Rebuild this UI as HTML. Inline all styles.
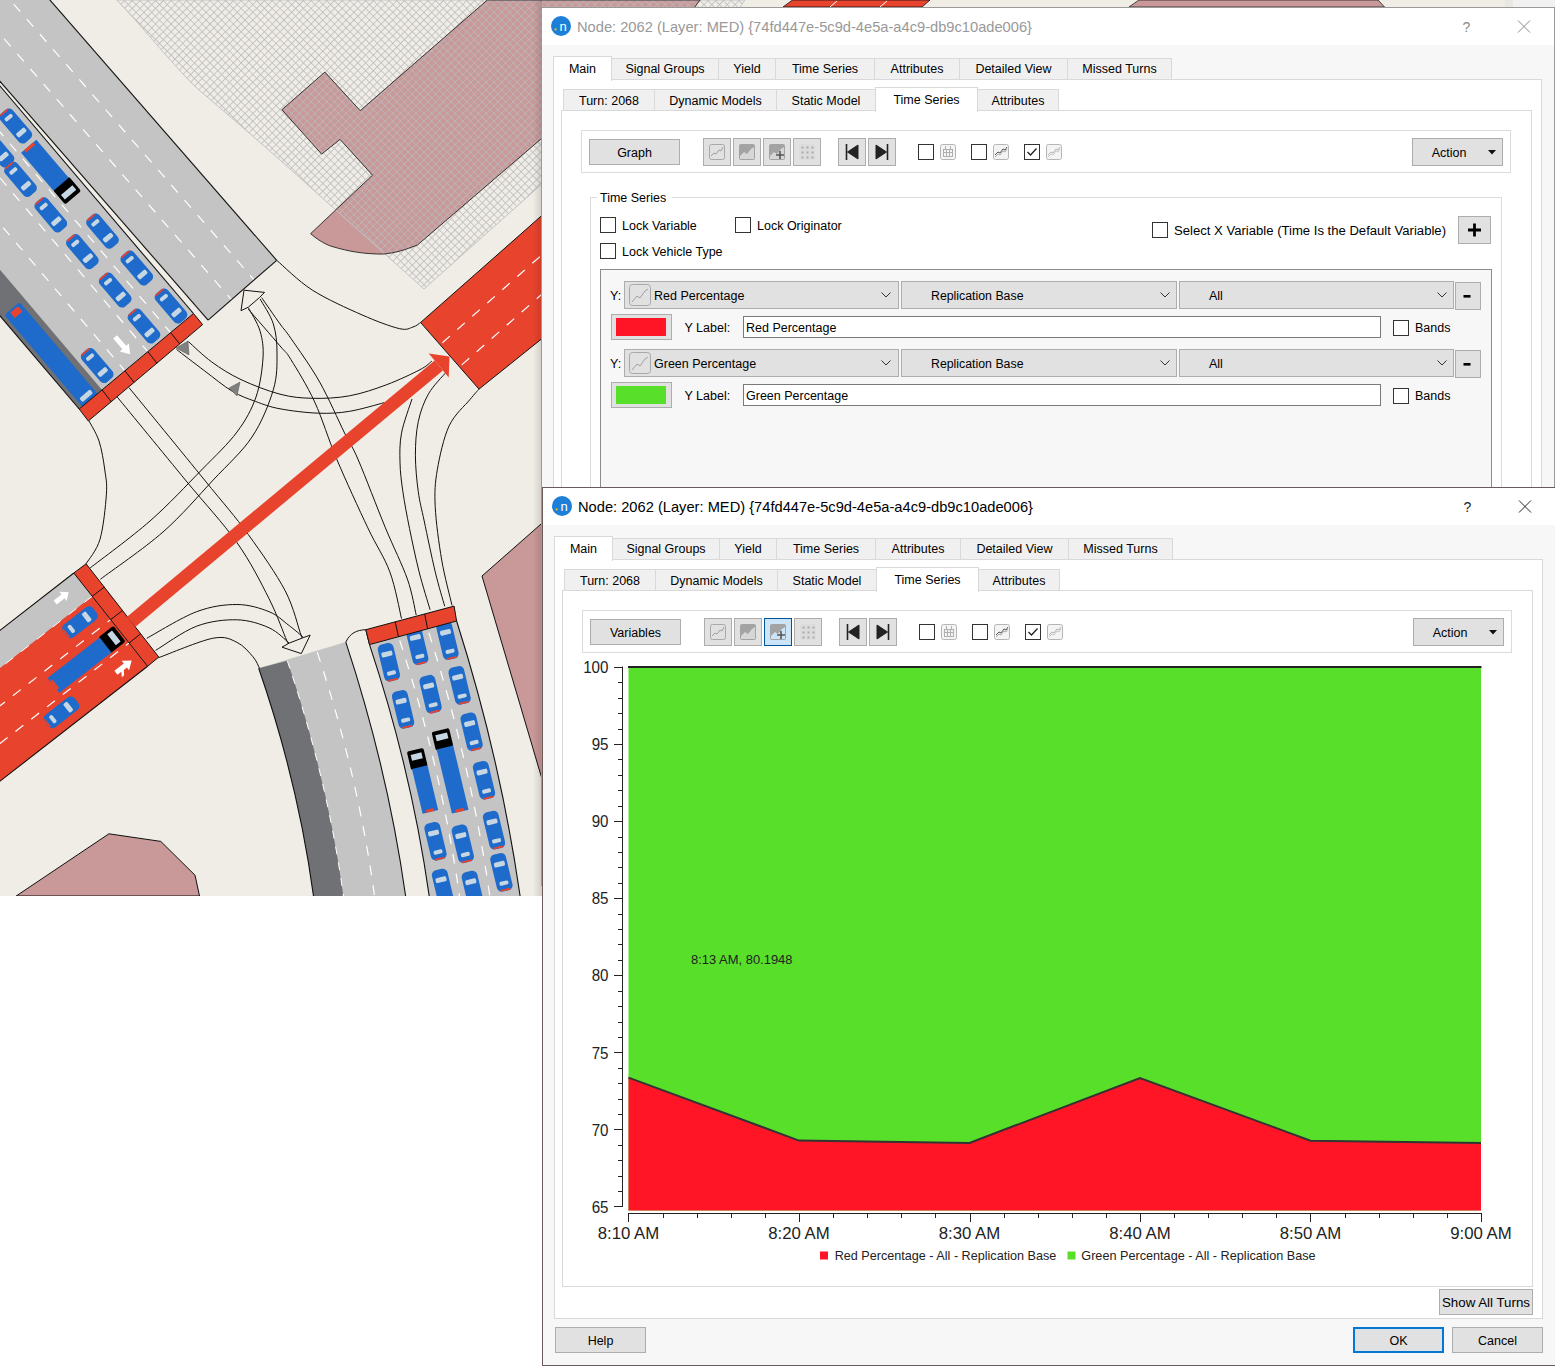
<!DOCTYPE html>
<html><head><meta charset="utf-8"><style>
html,body{margin:0;padding:0;background:#fff;width:1555px;height:1366px;overflow:hidden}
svg{display:block;font-family:"Liberation Sans", sans-serif}
</style></head><body>
<svg width="1555" height="1366" viewBox="0 0 1555 1366">

<defs><pattern id="hatch" width="5.5" height="5.5" patternUnits="userSpaceOnUse" patternTransform="rotate(45)"><path d="M0 0.4 H5.5 M0.4 0 V5.5" stroke="#b9b9bb" stroke-width="0.8" fill="none"/></pattern><linearGradient id="shad" x1="0" x2="1" y1="0" y2="0"><stop offset="0" stop-color="#000" stop-opacity="0"/><stop offset="1" stop-color="#000" stop-opacity="0.13"/></linearGradient><clipPath id="mapclip"><rect x="0" y="0" width="542" height="896"/><rect x="541" y="0" width="1014" height="7"/></clipPath></defs><g clip-path="url(#mapclip)"><rect x="0" y="0" width="1555" height="896" fill="#f0ede6"/><path d="M487.3,0 L360.2,110.7 L324.9,72.1 L281.9,109.7 L321.6,154.1 L340.1,139.4 L372.5,175.2 L310.6,233.7 C318,240 325,244 330.5,246 C350,252 365,254 382.7,254.1 C395,253 405,250 417.6,244.9 L540.5,139.4 L694.8,7 L700,0 Z" fill="#c99898"/><path d="M116.8,0 C150,35 170,62 196.8,88.1 C225,112 255,138 280,160 L424,289 L542.6,183.4 L740,7 L745,0 Z" fill="url(#hatch)" stroke="#c4c4c4" stroke-width="1"/><path d="M487.3,0 L360.2,110.7 L324.9,72.1 L281.9,109.7 L321.6,154.1 L340.1,139.4 L372.5,175.2 L310.6,233.7 C318,240 325,244 330.5,246 C350,252 365,254 382.7,254.1 C395,253 405,250 417.6,244.9 L540.5,139.4 L694.8,7 L700,0 Z" fill="none" stroke="#222" stroke-width="0.9"/><rect x="1505" y="0" width="8" height="7" fill="#e9e7e2"/><rect x="1513" y="0" width="42" height="7" fill="#f1f1f1"/><polygon points="1129,7 1139,0 1378,0 1384.5,7" fill="#c99898" stroke="#222" stroke-width="0.8"/><polygon points="276.7,260.3 208.1,320.1 -67.9,3.4 0.8,-56.4" fill="#c4c4c4"/><line x1="254.1" y1="280.0" x2="-21.9" y2="-36.7" stroke="#fff" stroke-width="1.2" stroke-dasharray="10 10" stroke-dashoffset="4"/><line x1="231.5" y1="299.7" x2="-44.5" y2="-17.0" stroke="#fff" stroke-width="1.2" stroke-dasharray="10 10" stroke-dashoffset="4"/><line x1="276.7" y1="260.3" x2="0.8" y2="-56.4" stroke="#111" stroke-width="1.1"/><line x1="208.1" y1="320.1" x2="-67.9" y2="3.4" stroke="#111" stroke-width="1.1"/><line x1="276.7" y1="260.3" x2="208.1" y2="320.1" stroke="#111" stroke-width="1.1"/><polygon points="193.5,313.5 79.2,409.0 -193.0,89.0 -78.7,-6.5" fill="#c4c4c4"/><polygon points="102.1,389.9 79.2,409.0 -193.0,89.0 -170.1,69.9" fill="#707174"/><line x1="124.9" y1="370.8" x2="-147.2" y2="50.8" stroke="#fff" stroke-width="1.2" stroke-dasharray="10 10" stroke-dashoffset="2"/><line x1="147.8" y1="351.7" x2="-124.4" y2="31.7" stroke="#fff" stroke-width="1.2" stroke-dasharray="10 10" stroke-dashoffset="2"/><line x1="170.6" y1="332.6" x2="-101.5" y2="12.6" stroke="#fff" stroke-width="1.2" stroke-dasharray="10 10" stroke-dashoffset="2"/><line x1="79.2" y1="409.0" x2="-193.0" y2="89.0" stroke="#111" stroke-width="1.1"/><line x1="193.5" y1="313.5" x2="-78.7" y2="-6.5" stroke="#111" stroke-width="1.1"/><g transform="translate(15.8,126.0) rotate(139.6)"><rect x="-8.0" y="-19.0" width="16" height="38" rx="5" fill="#1e6bcb"/><rect x="-5.5" y="-11.0" width="11" height="5" rx="1.5" fill="#c6d6e2"/><rect x="-4.5" y="9.0" width="9" height="4" rx="1.5" fill="#c6d6e2"/><rect x="-5.0" y="17.0" width="10" height="1.8" fill="#e8432d"/></g><g transform="translate(-2.0,150.0) rotate(139.6)"><rect x="-8.0" y="-19.0" width="16" height="38" rx="5" fill="#1e6bcb"/><rect x="-5.5" y="-11.0" width="11" height="5" rx="1.5" fill="#c6d6e2"/><rect x="-4.5" y="9.0" width="9" height="4" rx="1.5" fill="#c6d6e2"/><rect x="-5.0" y="17.0" width="10" height="1.8" fill="#e8432d"/></g><g transform="translate(20.5,179.3) rotate(139.6)"><rect x="-8.0" y="-19.0" width="16" height="38" rx="5" fill="#1e6bcb"/><rect x="-5.5" y="-11.0" width="11" height="5" rx="1.5" fill="#c6d6e2"/><rect x="-4.5" y="9.0" width="9" height="4" rx="1.5" fill="#c6d6e2"/><rect x="-5.0" y="17.0" width="10" height="1.8" fill="#e8432d"/></g><g transform="translate(50.8,214.8) rotate(139.6)"><rect x="-8.0" y="-19.0" width="16" height="38" rx="5" fill="#1e6bcb"/><rect x="-5.5" y="-11.0" width="11" height="5" rx="1.5" fill="#c6d6e2"/><rect x="-4.5" y="9.0" width="9" height="4" rx="1.5" fill="#c6d6e2"/><rect x="-5.0" y="17.0" width="10" height="1.8" fill="#e8432d"/></g><g transform="translate(102.5,231.2) rotate(139.6)"><rect x="-8.0" y="-19.0" width="16" height="38" rx="5" fill="#1e6bcb"/><rect x="-5.5" y="-11.0" width="11" height="5" rx="1.5" fill="#c6d6e2"/><rect x="-4.5" y="9.0" width="9" height="4" rx="1.5" fill="#c6d6e2"/><rect x="-5.0" y="17.0" width="10" height="1.8" fill="#e8432d"/></g><g transform="translate(82.4,251.7) rotate(139.6)"><rect x="-8.0" y="-19.0" width="16" height="38" rx="5" fill="#1e6bcb"/><rect x="-5.5" y="-11.0" width="11" height="5" rx="1.5" fill="#c6d6e2"/><rect x="-4.5" y="9.0" width="9" height="4" rx="1.5" fill="#c6d6e2"/><rect x="-5.0" y="17.0" width="10" height="1.8" fill="#e8432d"/></g><g transform="translate(136.8,268.0) rotate(139.6)"><rect x="-8.0" y="-19.0" width="16" height="38" rx="5" fill="#1e6bcb"/><rect x="-5.5" y="-11.0" width="11" height="5" rx="1.5" fill="#c6d6e2"/><rect x="-4.5" y="9.0" width="9" height="4" rx="1.5" fill="#c6d6e2"/><rect x="-5.0" y="17.0" width="10" height="1.8" fill="#e8432d"/></g><g transform="translate(115.2,290.0) rotate(139.6)"><rect x="-8.0" y="-19.0" width="16" height="38" rx="5" fill="#1e6bcb"/><rect x="-5.5" y="-11.0" width="11" height="5" rx="1.5" fill="#c6d6e2"/><rect x="-4.5" y="9.0" width="9" height="4" rx="1.5" fill="#c6d6e2"/><rect x="-5.0" y="17.0" width="10" height="1.8" fill="#e8432d"/></g><g transform="translate(171.0,306.0) rotate(139.6)"><rect x="-8.0" y="-19.0" width="16" height="38" rx="5" fill="#1e6bcb"/><rect x="-5.5" y="-11.0" width="11" height="5" rx="1.5" fill="#c6d6e2"/><rect x="-4.5" y="9.0" width="9" height="4" rx="1.5" fill="#c6d6e2"/><rect x="-5.0" y="17.0" width="10" height="1.8" fill="#e8432d"/></g><g transform="translate(144.0,326.0) rotate(139.6)"><rect x="-8.0" y="-19.0" width="16" height="38" rx="5" fill="#1e6bcb"/><rect x="-5.5" y="-11.0" width="11" height="5" rx="1.5" fill="#c6d6e2"/><rect x="-4.5" y="9.0" width="9" height="4" rx="1.5" fill="#c6d6e2"/><rect x="-5.0" y="17.0" width="10" height="1.8" fill="#e8432d"/></g><g transform="translate(97.2,365.5) rotate(139.6)"><rect x="-8.0" y="-19.0" width="16" height="38" rx="5" fill="#1e6bcb"/><rect x="-5.5" y="-11.0" width="11" height="5" rx="1.5" fill="#c6d6e2"/><rect x="-4.5" y="9.0" width="9" height="4" rx="1.5" fill="#c6d6e2"/><rect x="-5.0" y="17.0" width="10" height="1.8" fill="#e8432d"/></g><g transform="translate(51.5,171.5) rotate(139.6)"><rect x="-10.0" y="-34.0" width="21" height="19" rx="2" fill="#000"/><rect x="-7.0" y="-30.0" width="15" height="6" fill="#c6d6e2"/><rect x="-9.0" y="-16.0" width="20" height="50" fill="#1e6bcb"/><rect x="-5.0" y="31.0" width="12" height="3" fill="#e8432d"/></g><g transform="translate(51.5,355.0) rotate(139.6)"><rect x="-10.0" y="-61.0" width="20" height="122" rx="3" fill="#1e6bcb"/><rect x="-7.0" y="-56.0" width="14" height="5" rx="1.5" fill="#c6d6e2"/><rect x="-6.0" y="52.0" width="10" height="7" fill="#e8432d"/></g><g transform="translate(123,346) rotate(-41)"><path d="M-2.5,-12 H2.5 V2 H6 L0,11 L-6,2 H-2.5 Z" fill="#fff"/></g><polygon points="79.2,409.0 193.5,313.5 202.6,324.6 88.3,421.0" fill="#e8432d" stroke="#111" stroke-width="1"/><line x1="102.1" y1="389.9" x2="111.2" y2="401.7" stroke="#111" stroke-width="1"/><line x1="124.9" y1="370.8" x2="134.0" y2="382.4" stroke="#111" stroke-width="1"/><line x1="147.8" y1="351.7" x2="156.9" y2="363.2" stroke="#111" stroke-width="1"/><line x1="170.6" y1="332.6" x2="179.7" y2="343.9" stroke="#111" stroke-width="1"/><polygon points="420.6,322.5 479.0,389.1 541.6,338.9 560.0,322.0 560.0,200.0 541.6,215.7" fill="#e8432d"/><path d="M541.6,215.7 L420.6,322.5 L479,389.1 L541.6,338.9" fill="none" stroke="#111" stroke-width="1"/><line x1="440.1" y1="344.7" x2="560.1" y2="238.8" stroke="#fff" stroke-width="1.2" stroke-dasharray="10 10" stroke-dashoffset="-3"/><line x1="459.5" y1="366.9" x2="579.5" y2="261.0" stroke="#fff" stroke-width="1.2" stroke-dasharray="10 10" stroke-dashoffset="-3"/><polygon points="783,7 792.5,0 930,0 922,7" fill="#e8432d" stroke="#111" stroke-width="0.8"/><path d="M830,7 L837,1 M880,7 L887,1" stroke="#fff" stroke-width="1"/><polygon points="73.8,573.0 147.6,666.3 -57.5,825.9 -131.3,732.6" fill="#e8432d"/><polygon points="73.8,573.0 92.2,596.3 -112.9,756.0 -131.3,732.6" fill="#c4c4c4"/><line x1="110.7" y1="619.6" x2="-94.4" y2="779.3" stroke="#fff" stroke-width="1.2" stroke-dasharray="10 10" stroke-dashoffset="6"/><line x1="129.1" y1="643.0" x2="-76.0" y2="802.6" stroke="#fff" stroke-width="1.2" stroke-dasharray="10 10" stroke-dashoffset="6"/><line x1="92.2" y1="596.3" x2="-112.9" y2="756.0" stroke="#fff" stroke-width="1" stroke-dasharray="10 10" stroke-dashoffset="0"/><line x1="73.8" y1="573.0" x2="-131.3" y2="732.6" stroke="#111" stroke-width="1.1"/><line x1="147.6" y1="666.3" x2="-57.5" y2="825.9" stroke="#111" stroke-width="1.1"/><g transform="translate(80.0,622.2) rotate(52.1)"><rect x="-8.0" y="-19.0" width="16" height="38" rx="5" fill="#1e6bcb"/><rect x="-5.5" y="-11.0" width="11" height="5" rx="1.5" fill="#c6d6e2"/><rect x="-4.5" y="9.0" width="9" height="4" rx="1.5" fill="#c6d6e2"/><rect x="-5.0" y="17.0" width="10" height="1.8" fill="#e8432d"/></g><g transform="translate(61.5,712.4) rotate(52.1)"><rect x="-8.0" y="-19.0" width="16" height="38" rx="5" fill="#1e6bcb"/><rect x="-5.5" y="-11.0" width="11" height="5" rx="1.5" fill="#c6d6e2"/><rect x="-4.5" y="9.0" width="9" height="4" rx="1.5" fill="#c6d6e2"/><rect x="-5.0" y="17.0" width="10" height="1.8" fill="#e8432d"/></g><g transform="translate(86.0,659.0) rotate(52.1)"><rect x="-9.5" y="-42.0" width="20" height="19" rx="2" fill="#000"/><rect x="-6.5" y="-38.0" width="14" height="6" fill="#c6d6e2"/><rect x="-8.5" y="-24.0" width="19" height="66" fill="#1e6bcb"/><rect x="-4.5" y="39.0" width="11" height="3" fill="#e8432d"/></g><g transform="translate(61.5,597.6) rotate(52)"><path d="M-2.5,8 V-2 H-6 L0,-9 L6,-2 H2.5 V8 Z" fill="#fff"/></g><g transform="translate(123,667.3) rotate(52)"><path d="M-2.5,9 V-3 H-6 L0,-11 L6,-3 H2.5 V1 L7,4 V7 L2.5,4 V9 Z" fill="#fff"/></g><polygon points="73.8,573.0 86.1,563.8 158.8,657.1 147.6,666.3" fill="#e8432d" stroke="#111" stroke-width="1"/><line x1="92.2" y1="596.3" x2="104.3" y2="587.1" stroke="#111" stroke-width="1"/><line x1="110.7" y1="619.6" x2="122.5" y2="610.5" stroke="#111" stroke-width="1"/><line x1="129.1" y1="643.0" x2="140.6" y2="633.8" stroke="#111" stroke-width="1"/><path d="M258.7,668.3 L345.8,642.1 C373.7,726.7 393.7,811.4 405.6,896.0 L313.5,896 C303.2,820.1 285.0,744.2 258.7,668.3 Z" fill="#c4c4c4"/><path d="M258.7,668.3 L287.3,660.8 C314.0,739.2 332.7,817.6 343.4,896.0 L313.5,896 C303.2,820.1 285.0,744.2 258.7,668.3 Z" fill="#707174"/><path d="M287.3,660.8 C314.0,739.2 332.7,817.6 343.4,896.0" fill="none" stroke="#fff" stroke-width="1" stroke-dasharray="8 8"/><path d="M317.2,652.1 C344.3,733.4 363.4,814.7 374.5,896.0" fill="none" stroke="#fff" stroke-width="1.2" stroke-dasharray="10 10"/><path d="M258.7,668.3 C285.0,744.2 303.2,820.1 313.5,896.0 M345.8,642.1 C373.7,726.7 393.7,811.4 405.6,896.0" fill="none" stroke="#111" stroke-width="1.1"/><path d="M345.8,642.1 C350,633 357,630 365.8,629.7 L369.5,644.6" fill="none" stroke="#111" stroke-width="1"/><path d="M369.5,644.6 L456.6,621 C485.8,712.7 506.9,804.3 520.1,896.0 L429.2,896 C417.3,812.2 397.4,728.4 369.5,644.6 Z" fill="#c4c4c4"/><path d="M398.5,636.7 C426.9,723.2 447.2,809.6 459.5,896.0" fill="none" stroke="#fff" stroke-width="1.2" stroke-dasharray="10 10" stroke-dashoffset="-4"/><path d="M427.6,628.9 C456.3,717.9 477.1,807.0 489.8,896.0" fill="none" stroke="#fff" stroke-width="1.2" stroke-dasharray="10 10" stroke-dashoffset="-4"/><path d="M369.5,644.6 C397.4,728.4 417.3,812.2 429.2,896.0 M456.6,621 C485.8,712.7 506.9,804.3 520.1,896.0" fill="none" stroke="#111" stroke-width="1.1"/><g transform="translate(388.9,662.3) rotate(-13.4)"><rect x="-8.0" y="-19.0" width="16" height="38" rx="5" fill="#1e6bcb"/><rect x="-5.5" y="-11.0" width="11" height="5" rx="1.5" fill="#c6d6e2"/><rect x="-4.5" y="9.0" width="9" height="4" rx="1.5" fill="#c6d6e2"/><rect x="-5.0" y="17.0" width="10" height="1.8" fill="#e8432d"/></g><g transform="translate(403.1,709.4) rotate(-13.4)"><rect x="-8.0" y="-19.0" width="16" height="38" rx="5" fill="#1e6bcb"/><rect x="-5.5" y="-11.0" width="11" height="5" rx="1.5" fill="#c6d6e2"/><rect x="-4.5" y="9.0" width="9" height="4" rx="1.5" fill="#c6d6e2"/><rect x="-5.0" y="17.0" width="10" height="1.8" fill="#e8432d"/></g><g transform="translate(435.5,841.3) rotate(-13.4)"><rect x="-8.0" y="-19.0" width="16" height="38" rx="5" fill="#1e6bcb"/><rect x="-5.5" y="-11.0" width="11" height="5" rx="1.5" fill="#c6d6e2"/><rect x="-4.5" y="9.0" width="9" height="4" rx="1.5" fill="#c6d6e2"/><rect x="-5.0" y="17.0" width="10" height="1.8" fill="#e8432d"/></g><g transform="translate(443.0,888.0) rotate(-13.4)"><rect x="-8.0" y="-19.0" width="16" height="38" rx="5" fill="#1e6bcb"/><rect x="-5.5" y="-11.0" width="11" height="5" rx="1.5" fill="#c6d6e2"/><rect x="-4.5" y="9.0" width="9" height="4" rx="1.5" fill="#c6d6e2"/><rect x="-5.0" y="17.0" width="10" height="1.8" fill="#e8432d"/></g><g transform="translate(417.3,645.7) rotate(-13.4)"><rect x="-8.0" y="-19.0" width="16" height="38" rx="5" fill="#1e6bcb"/><rect x="-5.5" y="-11.0" width="11" height="5" rx="1.5" fill="#c6d6e2"/><rect x="-4.5" y="9.0" width="9" height="4" rx="1.5" fill="#c6d6e2"/><rect x="-5.0" y="17.0" width="10" height="1.8" fill="#e8432d"/></g><g transform="translate(430.6,694.2) rotate(-13.4)"><rect x="-8.0" y="-19.0" width="16" height="38" rx="5" fill="#1e6bcb"/><rect x="-5.5" y="-11.0" width="11" height="5" rx="1.5" fill="#c6d6e2"/><rect x="-4.5" y="9.0" width="9" height="4" rx="1.5" fill="#c6d6e2"/><rect x="-5.0" y="17.0" width="10" height="1.8" fill="#e8432d"/></g><g transform="translate(462.8,843.8) rotate(-13.4)"><rect x="-8.0" y="-19.0" width="16" height="38" rx="5" fill="#1e6bcb"/><rect x="-5.5" y="-11.0" width="11" height="5" rx="1.5" fill="#c6d6e2"/><rect x="-4.5" y="9.0" width="9" height="4" rx="1.5" fill="#c6d6e2"/><rect x="-5.0" y="17.0" width="10" height="1.8" fill="#e8432d"/></g><g transform="translate(472.8,890.0) rotate(-13.4)"><rect x="-8.0" y="-19.0" width="16" height="38" rx="5" fill="#1e6bcb"/><rect x="-5.5" y="-11.0" width="11" height="5" rx="1.5" fill="#c6d6e2"/><rect x="-4.5" y="9.0" width="9" height="4" rx="1.5" fill="#c6d6e2"/><rect x="-5.0" y="17.0" width="10" height="1.8" fill="#e8432d"/></g><g transform="translate(447.5,640.6) rotate(-13.4)"><rect x="-8.0" y="-19.0" width="16" height="38" rx="5" fill="#1e6bcb"/><rect x="-5.5" y="-11.0" width="11" height="5" rx="1.5" fill="#c6d6e2"/><rect x="-4.5" y="9.0" width="9" height="4" rx="1.5" fill="#c6d6e2"/><rect x="-5.0" y="17.0" width="10" height="1.8" fill="#e8432d"/></g><g transform="translate(459.6,685.4) rotate(-13.4)"><rect x="-8.0" y="-19.0" width="16" height="38" rx="5" fill="#1e6bcb"/><rect x="-5.5" y="-11.0" width="11" height="5" rx="1.5" fill="#c6d6e2"/><rect x="-4.5" y="9.0" width="9" height="4" rx="1.5" fill="#c6d6e2"/><rect x="-5.0" y="17.0" width="10" height="1.8" fill="#e8432d"/></g><g transform="translate(471.6,731.8) rotate(-13.4)"><rect x="-8.0" y="-19.0" width="16" height="38" rx="5" fill="#1e6bcb"/><rect x="-5.5" y="-11.0" width="11" height="5" rx="1.5" fill="#c6d6e2"/><rect x="-4.5" y="9.0" width="9" height="4" rx="1.5" fill="#c6d6e2"/><rect x="-5.0" y="17.0" width="10" height="1.8" fill="#e8432d"/></g><g transform="translate(484.0,780.3) rotate(-13.4)"><rect x="-8.0" y="-19.0" width="16" height="38" rx="5" fill="#1e6bcb"/><rect x="-5.5" y="-11.0" width="11" height="5" rx="1.5" fill="#c6d6e2"/><rect x="-4.5" y="9.0" width="9" height="4" rx="1.5" fill="#c6d6e2"/><rect x="-5.0" y="17.0" width="10" height="1.8" fill="#e8432d"/></g><g transform="translate(494.0,830.1) rotate(-13.4)"><rect x="-8.0" y="-19.0" width="16" height="38" rx="5" fill="#1e6bcb"/><rect x="-5.5" y="-11.0" width="11" height="5" rx="1.5" fill="#c6d6e2"/><rect x="-4.5" y="9.0" width="9" height="4" rx="1.5" fill="#c6d6e2"/><rect x="-5.0" y="17.0" width="10" height="1.8" fill="#e8432d"/></g><g transform="translate(501.4,872.4) rotate(-13.4)"><rect x="-8.0" y="-19.0" width="16" height="38" rx="5" fill="#1e6bcb"/><rect x="-5.5" y="-11.0" width="11" height="5" rx="1.5" fill="#c6d6e2"/><rect x="-4.5" y="9.0" width="9" height="4" rx="1.5" fill="#c6d6e2"/><rect x="-5.0" y="17.0" width="10" height="1.8" fill="#e8432d"/></g><g transform="translate(422.0,781.0) rotate(-13.4)"><rect x="-8.0" y="-32.0" width="17" height="19" rx="2" fill="#000"/><rect x="-5.0" y="-28.0" width="11" height="6" fill="#c6d6e2"/><rect x="-7.0" y="-14.0" width="16" height="46" fill="#1e6bcb"/><rect x="-3.0" y="29.0" width="8" height="3" fill="#e8432d"/></g><g transform="translate(449.5,771.0) rotate(-13.4)"><rect x="-8.5" y="-42.0" width="18" height="19" rx="2" fill="#000"/><rect x="-5.5" y="-38.0" width="12" height="6" fill="#c6d6e2"/><rect x="-7.5" y="-24.0" width="17" height="66" fill="#1e6bcb"/><rect x="-3.5" y="39.0" width="9" height="3" fill="#e8432d"/></g><polygon points="365.8,629.7 454.1,606.1 456.6,621.0 369.5,644.6" fill="#e8432d" stroke="#111" stroke-width="1"/><line x1="395.2" y1="621.8" x2="398.5" y2="636.7" stroke="#111" stroke-width="1"/><line x1="424.7" y1="614.0" x2="427.6" y2="628.9" stroke="#111" stroke-width="1"/><polygon points="482,576 542,523.2 560,523 560,850 542,779" fill="#c99898" stroke="#111" stroke-width="1"/><polygon points="16.2,896 108.9,833.8 160.8,841.4 195,875.2 199.5,896" fill="#c99898" stroke="#111" stroke-width="1"/><path d="M276.7,260.3 C282.6,265.2 298.0,280.9 312.2,290.0 C326.4,299.1 347.5,308.5 362.0,314.9 C376.5,321.3 390.8,326.6 399.3,328.6 C407.8,330.6 409.4,328.0 413.0,327.0 C416.6,326.0 419.3,323.2 420.6,322.5" fill="none" stroke="#111" stroke-width="1"/><path d="M88.8,420.6 C90.5,424.0 96.3,432.8 99.0,441.0 C101.7,449.2 103.6,461.1 104.8,470.0 C106.0,478.9 107.2,482.6 106.4,494.2 C105.6,505.8 103.4,527.7 100.0,539.3 C96.6,550.9 88.4,559.7 86.1,563.8" fill="none" stroke="#111" stroke-width="1"/><path d="M479.0,389.1 C477.5,390.8 475.0,393.4 470.0,399.5 C465.0,405.6 454.6,414.2 449.1,425.9 C443.7,437.6 439.6,456.4 437.3,469.8 C435.0,483.2 434.5,491.4 435.2,506.4 C435.9,521.4 438.9,543.5 441.7,560.0 C444.5,576.5 450.3,597.8 452.0,605.4" fill="none" stroke="#111" stroke-width="1"/><path d="M158.8,657.6 C167.8,654.4 199.7,640.8 212.7,638.3 C225.7,635.8 230.2,639.2 236.9,642.3 C243.6,645.4 249.2,652.5 253.0,656.8 C256.8,661.1 258.3,666.2 259.4,668.1" fill="none" stroke="#111" stroke-width="1"/><path d="M188.3,341.5 C192.2,344.9 203.0,355.6 211.8,362.0 C220.6,368.4 229.6,374.2 241.0,379.6 C252.4,385.0 268.1,391.1 280.0,394.2 C291.9,397.3 300.6,398.0 312.2,398.3 C323.8,398.6 337.2,398.1 349.6,395.8 C362.1,393.5 375.2,389.0 386.9,384.6 C398.6,380.2 412.5,373.6 420.0,369.7 C427.5,365.8 430.0,362.4 432.0,361.0" fill="none" stroke="#111" stroke-width="1"/><path d="M176.6,349.5 C181.2,353.1 195.2,363.8 204.5,370.8 C213.8,377.8 223.8,386.2 232.3,391.3 C240.8,396.4 247.8,398.6 255.7,401.5 C263.6,404.4 269.5,406.9 280.0,408.8 C290.5,410.8 306.9,412.8 318.5,413.2 C330.1,413.6 338.6,413.1 349.6,411.3 C360.6,409.5 378.6,404.1 384.4,402.6" fill="none" stroke="#111" stroke-width="1"/><path d="M90.2,567.9 C100.2,560.1 131.4,537.3 150.0,521.0 C168.6,504.7 187.0,484.8 201.5,470.0 C216.0,455.2 227.9,444.2 237.0,432.0 C246.1,419.8 251.7,409.3 256.0,397.0 C260.3,384.7 262.3,369.0 263.0,358.0 C263.7,347.0 262.5,339.6 260.1,331.2 C257.7,322.8 250.4,311.7 248.4,307.8" fill="none" stroke="#111" stroke-width="1"/><path d="M100.4,579.2 C110.8,571.3 144.2,548.5 163.0,532.0 C181.8,515.5 198.4,495.8 213.2,480.0 C228.0,464.2 242.0,452.0 252.0,437.0 C262.0,422.0 269.1,403.8 273.3,389.8 C277.5,375.8 277.0,364.0 277.0,353.0 C277.0,342.0 276.1,332.9 273.3,323.9 C270.5,314.9 262.3,303.1 260.1,299.0" fill="none" stroke="#111" stroke-width="1"/><path d="M248.4,309.3 C253.7,315.4 272.9,337.5 280.0,345.9 C287.1,354.3 285.2,350.3 291.0,359.7 C296.8,369.1 307.0,385.3 314.7,402.0 C322.4,418.7 328.2,439.0 337.1,460.0 C346.0,481.0 359.0,509.2 367.8,527.8 C376.6,546.4 384.2,556.7 389.8,571.8 C395.4,586.9 399.6,610.8 401.5,618.6" fill="none" stroke="#111" stroke-width="1"/><path d="M261.6,297.6 C264.7,302.0 275.1,317.1 280.0,323.9 C284.9,330.7 284.4,328.8 291.0,338.5 C297.6,348.2 310.8,366.3 319.7,382.1 C328.6,397.9 338.2,420.1 344.6,433.1 C351.0,446.1 351.5,444.2 358.3,460.0 C365.1,475.8 377.2,507.9 385.4,527.8 C393.6,547.6 402.3,564.6 407.4,579.1 C412.5,593.6 414.7,609.0 416.2,615.0" fill="none" stroke="#111" stroke-width="1"/><path d="M412.0,399.0 C410.2,404.7 403.5,422.6 401.5,433.2 C399.5,443.8 399.8,452.7 400.0,462.5 C400.2,472.3 401.3,480.8 402.9,491.8 C404.5,502.8 406.8,515.1 409.5,528.4 C412.2,541.7 415.7,558.2 419.1,571.8 C422.5,585.4 428.3,603.5 430.1,609.8" fill="none" stroke="#111" stroke-width="1"/><path d="M446.3,372.0 C443.4,375.6 433.3,385.4 428.6,393.7 C423.9,401.9 420.5,411.2 418.3,421.5 C416.1,431.8 415.4,443.5 415.4,455.2 C415.4,466.9 416.8,480.8 418.3,491.8 C419.8,502.8 421.4,507.7 424.2,521.0 C427.0,534.3 431.8,557.6 435.2,571.8 C438.6,586.0 443.1,600.5 444.7,606.2" fill="none" stroke="#111" stroke-width="1"/><path d="M117.3,397.1 C128.7,410.9 165.5,455.8 185.4,480.0 C205.3,504.2 222.9,522.7 236.9,542.5 C250.9,562.3 260.8,582.4 269.1,598.8 C277.4,615.2 283.5,633.3 286.8,640.7 C290.1,648.1 288.8,642.7 289.2,643.1" fill="none" stroke="#111" stroke-width="1"/><path d="M129.0,387.6 C141.6,403.0 184.6,455.5 204.5,480.0 C224.4,504.5 234.8,515.9 248.2,534.4 C261.6,552.9 276.3,573.9 285.2,590.8 C294.1,607.7 298.2,628.1 301.3,635.9 C304.4,643.7 303.3,637.2 303.7,637.5" fill="none" stroke="#111" stroke-width="1"/><path d="M146.7,638.3 C155.0,633.9 181.6,617.3 196.6,611.7 C211.6,606.1 224.8,604.5 236.9,604.5 C249.0,604.5 260.5,608.3 269.1,611.7 C277.7,615.1 282.6,620.7 288.4,625.0 C294.2,629.3 301.1,635.4 303.7,637.5" fill="none" stroke="#111" stroke-width="1"/><path d="M155.6,650.4 C162.4,646.4 183.0,631.3 196.6,626.2 C210.2,621.1 224.8,619.5 236.9,619.8 C249.0,620.1 260.4,623.9 269.1,627.8 C277.8,631.7 285.9,640.5 289.2,643.1" fill="none" stroke="#111" stroke-width="1"/><polygon points="244,290.2 264.5,292.4 259.4,297.6 248.4,307.1 241,310.7" fill="#f0ede6" stroke="#111" stroke-width="1"/><polygon points="301.3,653.6 282,647.2 289.2,643.1 303.7,637.5 310.2,635.1" fill="#f0ede6" stroke="#111" stroke-width="1"/><polygon points="135.2,627.0 442.9,370.5 434.6,360.5 126.8,617.0" fill="#e8432d"/><polygon points="449.5,356.5 448.7,377.4 428.8,353.6" fill="#e8432d"/><polygon points="176,348 188,341 189,355" fill="#808080" stroke="#555" stroke-width="0.5"/><polygon points="229,388 240,382 237,396" fill="#808080" stroke="#555" stroke-width="0.5"/></g><rect x="0" y="896" width="542" height="470" fill="#ffffff"/><rect x="533" y="0" width="9" height="896" fill="url(#shad)"/>
<g transform="translate(0,0)"><rect x="541" y="7" width="1020" height="879" fill="#f7f7f7"/><rect x="542" y="8" width="1012" height="37" fill="#ffffff"/><rect x="541.5" y="7.5" width="1013" height="878" fill="none" stroke="#9a9a9a" stroke-width="1"/><circle cx="561" cy="26" r="10" fill="#1e7fd9"/><text x="563" y="30.5" font-size="13" fill="#fff" text-anchor="middle">n</text><circle cx="555.6" cy="29.4" r="1.1" fill="#f5c000"/><text x="577" y="31.8" font-size="14.6" fill="#999" textLength="455" lengthAdjust="spacingAndGlyphs">Node: 2062 (Layer: MED) {74fd447e-5c9d-4e5a-a4c9-db9c10ade006}</text><text x="1466.5" y="31.5" font-size="14" fill="#8a8a8a" text-anchor="middle">?</text><path d="M1518 20.5 L1530 32.5 M1530 20.5 L1518 32.5" stroke="#8a8a8a" stroke-width="1"/><rect x="553.5" y="79.5" width="988" height="759" fill="#ffffff" stroke="#d9d9d9" stroke-width="1"/><rect x="611.5" y="58.5" width="107" height="21" fill="#f0f0f0" stroke="#d9d9d9" stroke-width="1"/><rect x="718.5" y="58.5" width="57" height="21" fill="#f0f0f0" stroke="#d9d9d9" stroke-width="1"/><rect x="775.5" y="58.5" width="99" height="21" fill="#f0f0f0" stroke="#d9d9d9" stroke-width="1"/><rect x="874.5" y="58.5" width="85" height="21" fill="#f0f0f0" stroke="#d9d9d9" stroke-width="1"/><rect x="959.5" y="58.5" width="108" height="21" fill="#f0f0f0" stroke="#d9d9d9" stroke-width="1"/><rect x="1067.5" y="58.5" width="104" height="21" fill="#f0f0f0" stroke="#d9d9d9" stroke-width="1"/><text x="665.0" y="73.3" font-size="12.5" fill="#000" text-anchor="middle">Signal Groups</text><text x="747.0" y="73.3" font-size="12.5" fill="#000" text-anchor="middle">Yield</text><text x="825.0" y="73.3" font-size="12.5" fill="#000" text-anchor="middle">Time Series</text><text x="917.0" y="73.3" font-size="12.5" fill="#000" text-anchor="middle">Attributes</text><text x="1013.5" y="73.3" font-size="12.5" fill="#000" text-anchor="middle">Detailed View</text><text x="1119.5" y="73.3" font-size="12.5" fill="#000" text-anchor="middle">Missed Turns</text><rect x="553.5" y="56.5" width="58" height="24" fill="#ffffff" stroke="#d9d9d9" stroke-width="1"/><rect x="554" y="79" width="57" height="2" fill="#ffffff"/><text x="582.5" y="73.3" font-size="12.5" fill="#000" text-anchor="middle">Main</text><rect x="561.5" y="110.5" width="970" height="696" fill="#ffffff" stroke="#d9d9d9" stroke-width="1"/><rect x="563.5" y="89.5" width="91" height="21" fill="#f0f0f0" stroke="#d9d9d9" stroke-width="1"/><text x="609.0" y="104.5" font-size="12.5" fill="#000" text-anchor="middle">Turn: 2068</text><rect x="654.5" y="89.5" width="122" height="21" fill="#f0f0f0" stroke="#d9d9d9" stroke-width="1"/><text x="715.5" y="104.5" font-size="12.5" fill="#000" text-anchor="middle">Dynamic Models</text><rect x="776.5" y="89.5" width="99" height="21" fill="#f0f0f0" stroke="#d9d9d9" stroke-width="1"/><text x="826.0" y="104.5" font-size="12.5" fill="#000" text-anchor="middle">Static Model</text><rect x="977.5" y="89.5" width="81" height="21" fill="#f0f0f0" stroke="#d9d9d9" stroke-width="1"/><text x="1018.0" y="104.5" font-size="12.5" fill="#000" text-anchor="middle">Attributes</text><rect x="875.5" y="87.5" width="102" height="24" fill="#ffffff" stroke="#d9d9d9" stroke-width="1"/><rect x="876" y="110" width="101" height="2" fill="#ffffff"/><text x="926.5" y="103.8" font-size="12.5" fill="#000" text-anchor="middle">Time Series</text><rect x="581.5" y="130.5" width="929" height="42" fill="#ffffff" stroke="#dcdcdc" stroke-width="1"/><rect x="589.5" y="139.5" width="90" height="25" fill="#e1e1e1" stroke="#adadad" stroke-width="1"/><text x="634.5" y="156.5" font-size="12.5" fill="#000" text-anchor="middle">Graph</text><rect x="703.5" y="138.5" width="27" height="27" fill="#e1e1e1" stroke="#adadad" stroke-width="1"/><rect x="709.5" y="144.5" width="15" height="15" fill="none" stroke="#a8a8a8" stroke-width="1" rx="2"/><path d="M711 156 L714 153 L716 154 L719 150 L721 151 L723 147" fill="none" stroke="#a0a0a0" stroke-width="1"/><rect x="733.5" y="138.5" width="27" height="27" fill="#e1e1e1" stroke="#adadad" stroke-width="1"/><rect x="739" y="144" width="16" height="16" fill="#a3a3a3" rx="2"/><path d="M740 159 L740 156 L744 152 L747 154 L751 149 L754 147 L754 159 Z" fill="#d6d6d6"/><rect x="763.5" y="138.5" width="27" height="27" fill="#e1e1e1" stroke="#adadad" stroke-width="1"/><rect x="769" y="144" width="16" height="16" fill="#a3a3a3" rx="2"/><path d="M770 159 L770 156 L774 152 L777 154 L781 149 L784 147 L784 159 Z" fill="#d6d6d6"/><path d="M780 151 V159 M776 155 H784" stroke="#555" stroke-width="1.6"/><rect x="793.5" y="138.5" width="27" height="27" fill="#e1e1e1" stroke="#adadad" stroke-width="1"/><rect x="799" y="144" width="16" height="16" fill="#dcdcdc" rx="2"/><rect x="801.5" y="146.5" width="2" height="2" fill="#aaa"/><rect x="801.5" y="151.5" width="2" height="2" fill="#aaa"/><rect x="801.5" y="156.5" width="2" height="2" fill="#aaa"/><rect x="806.5" y="146.5" width="2" height="2" fill="#aaa"/><rect x="806.5" y="151.5" width="2" height="2" fill="#aaa"/><rect x="806.5" y="156.5" width="2" height="2" fill="#aaa"/><rect x="811.5" y="146.5" width="2" height="2" fill="#aaa"/><rect x="811.5" y="151.5" width="2" height="2" fill="#aaa"/><rect x="811.5" y="156.5" width="2" height="2" fill="#aaa"/><rect x="838.5" y="138.5" width="27" height="27" fill="#e1e1e1" stroke="#adadad" stroke-width="1"/><path d="M846.5 144 V160" stroke="#222" stroke-width="1.6"/><path d="M847.5 152 L858 145 L858 159 Z" fill="#222" stroke="#222" stroke-linejoin="round"/><rect x="868.5" y="138.5" width="27" height="27" fill="#e1e1e1" stroke="#adadad" stroke-width="1"/><path d="M887.5 144 V160" stroke="#222" stroke-width="1.6"/><path d="M886.5 152 L876 145 L876 159 Z" fill="#222" stroke="#222" stroke-linejoin="round"/><rect x="918.5" y="144.5" width="15" height="15" fill="#fff" stroke="#333" stroke-width="1"/><rect x="940.5" y="144.5" width="15" height="15" fill="#f4f4f4" stroke="#b5b5b5" stroke-width="1" rx="2"/><rect x="943.5" y="149.5" width="9" height="7" fill="none" stroke="#b0b0b0" stroke-width="1"/><path d="M943.5 152.5 H952.5 M946.5 149.5 V156.5 M949.5 149.5 V156.5 M945.5 146 V149 M950.5 146 V149" stroke="#b0b0b0" stroke-width="1"/><rect x="971.5" y="144.5" width="15" height="15" fill="#fff" stroke="#333" stroke-width="1"/><rect x="993.5" y="144.5" width="15" height="15" fill="#f4f4f4" stroke="#b5b5b5" stroke-width="1" rx="2"/><path d="M995 155 L998 152 L1000 153 L1003 149 L1005 150 L1007 147" fill="none" stroke="#555" stroke-width="1"/><path d="M995 157 L998 154 L1000 155 L1003 151 L1005 152 L1007 149" fill="none" stroke="#aaa" stroke-width="1"/><rect x="1024.5" y="144.5" width="15" height="15" fill="#fff" stroke="#333" stroke-width="1"/><path d="M1027.5 152 L1030.5 155 L1036.5 148.5" fill="none" stroke="#222" stroke-width="1.3"/><rect x="1046.5" y="144.5" width="15" height="15" fill="#f4f4f4" stroke="#b5b5b5" stroke-width="1" rx="2"/><path d="M1048 155 L1051 152 L1053 153 L1056 149 L1058 150 L1060 147" fill="none" stroke="#b5b5b5" stroke-width="1"/><path d="M1048 157 L1051 154 L1053 155 L1056 151 L1058 152 L1060 149" fill="none" stroke="#c8c8c8" stroke-width="1"/><rect x="1412.5" y="138.5" width="90" height="27" fill="#e1e1e1" stroke="#adadad" stroke-width="1"/><text x="1449" y="156.5" font-size="12.5" fill="#000" text-anchor="middle">Action</text><path d="M1488 150 H1496 L1492 154.5 Z" fill="#111"/><rect x="590.5" y="197.5" width="911" height="803" fill="none" stroke="#dcdcdc" stroke-width="1"/><rect x="597" y="190" width="75" height="12" fill="#ffffff"/><text x="600" y="202.2" font-size="12.5" fill="#000">Time Series</text><rect x="600.5" y="217.5" width="15" height="15" fill="#fff" stroke="#333" stroke-width="1"/><text x="622" y="230" font-size="12.5" fill="#000">Lock Variable</text><rect x="735.5" y="217.5" width="15" height="15" fill="#fff" stroke="#333" stroke-width="1"/><text x="757" y="230" font-size="12.5" fill="#000">Lock Originator</text><rect x="600.5" y="243.5" width="15" height="15" fill="#fff" stroke="#333" stroke-width="1"/><text x="622" y="256" font-size="12.5" fill="#000">Lock Vehicle Type</text><rect x="1152.5" y="222.5" width="15" height="15" fill="#fff" stroke="#333" stroke-width="1"/><text x="1174" y="235.2" font-size="12.5" fill="#000" textLength="272" lengthAdjust="spacingAndGlyphs">Select X Variable (Time Is the Default Variable)</text><rect x="1458.5" y="216.5" width="32" height="27" fill="#e1e1e1" stroke="#adadad" stroke-width="1"/><path d="M1474.5 223.5 V236.5 M1468 230 H1481" stroke="#000" stroke-width="2.8"/><rect x="600.5" y="269.5" width="891" height="731" fill="#f7f7f7" stroke="#8c8c8c" stroke-width="1"/><text x="610" y="300" font-size="12.5" fill="#000">Y:</text><rect x="624.5" y="281.5" width="274" height="27" fill="#e1e1e1" stroke="#adadad" stroke-width="1"/><rect x="629.5" y="284.5" width="21" height="21" fill="none" stroke="#a8a8a8" stroke-width="1" rx="3"/><path d="M632 302 L637 296 L640 298 L645 291 L648 289" fill="none" stroke="#a0a0a0"/><text x="654" y="299.5" font-size="12.5" fill="#000">Red Percentage</text><path d="M881.5 292.5 L886 297 L890.5 292.5" fill="none" stroke="#333"/><rect x="901.5" y="281.5" width="275" height="27" fill="#e1e1e1" stroke="#adadad" stroke-width="1"/><text x="931" y="299.5" font-size="12.5" fill="#000" textLength="92.5" lengthAdjust="spacingAndGlyphs">Replication Base</text><path d="M1160.5 292.5 L1165 297 L1169.5 292.5" fill="none" stroke="#333"/><rect x="1179.5" y="281.5" width="274" height="27" fill="#e1e1e1" stroke="#adadad" stroke-width="1"/><text x="1209" y="299.5" font-size="12.5" fill="#000">All</text><path d="M1437.5 292.5 L1442 297 L1446.5 292.5" fill="none" stroke="#333"/><rect x="1455.5" y="282.5" width="25" height="27" fill="#e1e1e1" stroke="#adadad" stroke-width="1"/><rect x="1463.5" y="295" width="7" height="2.6" fill="#000"/><rect x="611.5" y="314.5" width="60" height="25" fill="#e1e1e1" stroke="#adadad" stroke-width="1"/><rect x="616" y="318" width="50" height="18" fill="#ff1525"/><text x="684.5" y="332" font-size="12.5" fill="#000">Y Label:</text><rect x="743.5" y="316.5" width="637" height="21" fill="#ffffff" stroke="#7a7a7a" stroke-width="1"/><text x="746" y="332" font-size="12.5" fill="#000">Red Percentage</text><rect x="1393.5" y="320.5" width="15" height="15" fill="#fff" stroke="#333" stroke-width="1"/><text x="1415" y="332" font-size="12.5" fill="#000">Bands</text><text x="610" y="368" font-size="12.5" fill="#000">Y:</text><rect x="624.5" y="349.5" width="274" height="27" fill="#e1e1e1" stroke="#adadad" stroke-width="1"/><rect x="629.5" y="352.5" width="21" height="21" fill="none" stroke="#a8a8a8" stroke-width="1" rx="3"/><path d="M632 370 L637 364 L640 366 L645 359 L648 357" fill="none" stroke="#a0a0a0"/><text x="654" y="367.5" font-size="12.5" fill="#000">Green Percentage</text><path d="M881.5 360.5 L886 365 L890.5 360.5" fill="none" stroke="#333"/><rect x="901.5" y="349.5" width="275" height="27" fill="#e1e1e1" stroke="#adadad" stroke-width="1"/><text x="931" y="367.5" font-size="12.5" fill="#000" textLength="92.5" lengthAdjust="spacingAndGlyphs">Replication Base</text><path d="M1160.5 360.5 L1165 365 L1169.5 360.5" fill="none" stroke="#333"/><rect x="1179.5" y="349.5" width="274" height="27" fill="#e1e1e1" stroke="#adadad" stroke-width="1"/><text x="1209" y="367.5" font-size="12.5" fill="#000">All</text><path d="M1437.5 360.5 L1442 365 L1446.5 360.5" fill="none" stroke="#333"/><rect x="1455.5" y="350.5" width="25" height="27" fill="#e1e1e1" stroke="#adadad" stroke-width="1"/><rect x="1463.5" y="363" width="7" height="2.6" fill="#000"/><rect x="611.5" y="382.5" width="60" height="25" fill="#e1e1e1" stroke="#adadad" stroke-width="1"/><rect x="616" y="386" width="50" height="18" fill="#58df2a"/><text x="684.5" y="400" font-size="12.5" fill="#000">Y Label:</text><rect x="743.5" y="384.5" width="637" height="21" fill="#ffffff" stroke="#7a7a7a" stroke-width="1"/><text x="746" y="400" font-size="12.5" fill="#000">Green Percentage</text><rect x="1393.5" y="388.5" width="15" height="15" fill="#fff" stroke="#333" stroke-width="1"/><text x="1415" y="400" font-size="12.5" fill="#000">Bands</text></g>
<g transform="translate(1,480)"><rect x="541" y="7" width="1020" height="879" fill="#f7f7f7"/><rect x="542" y="8" width="1018" height="37" fill="#ffffff"/><rect x="541.5" y="7.5" width="1019" height="878" fill="none" stroke="#6a5a5a" stroke-width="1"/><circle cx="561" cy="26" r="10" fill="#1e7fd9"/><text x="563" y="30.5" font-size="13" fill="#fff" text-anchor="middle">n</text><circle cx="555.6" cy="29.4" r="1.1" fill="#f5c000"/><text x="577" y="31.8" font-size="14.6" fill="#000" textLength="455" lengthAdjust="spacingAndGlyphs">Node: 2062 (Layer: MED) {74fd447e-5c9d-4e5a-a4c9-db9c10ade006}</text><text x="1466.5" y="31.5" font-size="14" fill="#222" text-anchor="middle">?</text><path d="M1518 20.5 L1530 32.5 M1530 20.5 L1518 32.5" stroke="#222" stroke-width="1"/><rect x="553.5" y="79.5" width="988" height="759" fill="#ffffff" stroke="#d9d9d9" stroke-width="1"/><rect x="611.5" y="58.5" width="107" height="21" fill="#f0f0f0" stroke="#d9d9d9" stroke-width="1"/><rect x="718.5" y="58.5" width="57" height="21" fill="#f0f0f0" stroke="#d9d9d9" stroke-width="1"/><rect x="775.5" y="58.5" width="99" height="21" fill="#f0f0f0" stroke="#d9d9d9" stroke-width="1"/><rect x="874.5" y="58.5" width="85" height="21" fill="#f0f0f0" stroke="#d9d9d9" stroke-width="1"/><rect x="959.5" y="58.5" width="108" height="21" fill="#f0f0f0" stroke="#d9d9d9" stroke-width="1"/><rect x="1067.5" y="58.5" width="104" height="21" fill="#f0f0f0" stroke="#d9d9d9" stroke-width="1"/><text x="665.0" y="73.3" font-size="12.5" fill="#000" text-anchor="middle">Signal Groups</text><text x="747.0" y="73.3" font-size="12.5" fill="#000" text-anchor="middle">Yield</text><text x="825.0" y="73.3" font-size="12.5" fill="#000" text-anchor="middle">Time Series</text><text x="917.0" y="73.3" font-size="12.5" fill="#000" text-anchor="middle">Attributes</text><text x="1013.5" y="73.3" font-size="12.5" fill="#000" text-anchor="middle">Detailed View</text><text x="1119.5" y="73.3" font-size="12.5" fill="#000" text-anchor="middle">Missed Turns</text><rect x="553.5" y="56.5" width="58" height="24" fill="#ffffff" stroke="#d9d9d9" stroke-width="1"/><rect x="554" y="79" width="57" height="2" fill="#ffffff"/><text x="582.5" y="73.3" font-size="12.5" fill="#000" text-anchor="middle">Main</text><rect x="561.5" y="110.5" width="970" height="696" fill="#ffffff" stroke="#d9d9d9" stroke-width="1"/><rect x="563.5" y="89.5" width="91" height="21" fill="#f0f0f0" stroke="#d9d9d9" stroke-width="1"/><text x="609.0" y="104.5" font-size="12.5" fill="#000" text-anchor="middle">Turn: 2068</text><rect x="654.5" y="89.5" width="122" height="21" fill="#f0f0f0" stroke="#d9d9d9" stroke-width="1"/><text x="715.5" y="104.5" font-size="12.5" fill="#000" text-anchor="middle">Dynamic Models</text><rect x="776.5" y="89.5" width="99" height="21" fill="#f0f0f0" stroke="#d9d9d9" stroke-width="1"/><text x="826.0" y="104.5" font-size="12.5" fill="#000" text-anchor="middle">Static Model</text><rect x="977.5" y="89.5" width="81" height="21" fill="#f0f0f0" stroke="#d9d9d9" stroke-width="1"/><text x="1018.0" y="104.5" font-size="12.5" fill="#000" text-anchor="middle">Attributes</text><rect x="875.5" y="87.5" width="102" height="24" fill="#ffffff" stroke="#d9d9d9" stroke-width="1"/><rect x="876" y="110" width="101" height="2" fill="#ffffff"/><text x="926.5" y="103.8" font-size="12.5" fill="#000" text-anchor="middle">Time Series</text><rect x="581.5" y="130.5" width="929" height="42" fill="#ffffff" stroke="#dcdcdc" stroke-width="1"/><rect x="589.5" y="139.5" width="90" height="25" fill="#e1e1e1" stroke="#adadad" stroke-width="1"/><text x="634.5" y="156.5" font-size="12.5" fill="#000" text-anchor="middle">Variables</text><rect x="703.5" y="138.5" width="27" height="27" fill="#e1e1e1" stroke="#adadad" stroke-width="1"/><rect x="709.5" y="144.5" width="15" height="15" fill="none" stroke="#a8a8a8" stroke-width="1" rx="2"/><path d="M711 156 L714 153 L716 154 L719 150 L721 151 L723 147" fill="none" stroke="#a0a0a0" stroke-width="1"/><rect x="733.5" y="138.5" width="27" height="27" fill="#e1e1e1" stroke="#adadad" stroke-width="1"/><rect x="739" y="144" width="16" height="16" fill="#a3a3a3" rx="2"/><path d="M740 159 L740 156 L744 152 L747 154 L751 149 L754 147 L754 159 Z" fill="#d6d6d6"/><rect x="763.5" y="138.5" width="27" height="27" fill="#cce4f7" stroke="#005499" stroke-width="1"/><rect x="769" y="144" width="16" height="16" fill="#a3a3a3" rx="2"/><path d="M770 159 L770 156 L774 152 L777 154 L781 149 L784 147 L784 159 Z" fill="#cce4f7"/><path d="M780 151 V159 M776 155 H784" stroke="#555" stroke-width="1.6"/><rect x="793.5" y="138.5" width="27" height="27" fill="#e1e1e1" stroke="#adadad" stroke-width="1"/><rect x="799" y="144" width="16" height="16" fill="#dcdcdc" rx="2"/><rect x="801.5" y="146.5" width="2" height="2" fill="#aaa"/><rect x="801.5" y="151.5" width="2" height="2" fill="#aaa"/><rect x="801.5" y="156.5" width="2" height="2" fill="#aaa"/><rect x="806.5" y="146.5" width="2" height="2" fill="#aaa"/><rect x="806.5" y="151.5" width="2" height="2" fill="#aaa"/><rect x="806.5" y="156.5" width="2" height="2" fill="#aaa"/><rect x="811.5" y="146.5" width="2" height="2" fill="#aaa"/><rect x="811.5" y="151.5" width="2" height="2" fill="#aaa"/><rect x="811.5" y="156.5" width="2" height="2" fill="#aaa"/><rect x="838.5" y="138.5" width="27" height="27" fill="#e1e1e1" stroke="#adadad" stroke-width="1"/><path d="M846.5 144 V160" stroke="#222" stroke-width="1.6"/><path d="M847.5 152 L858 145 L858 159 Z" fill="#222" stroke="#222" stroke-linejoin="round"/><rect x="868.5" y="138.5" width="27" height="27" fill="#e1e1e1" stroke="#adadad" stroke-width="1"/><path d="M887.5 144 V160" stroke="#222" stroke-width="1.6"/><path d="M886.5 152 L876 145 L876 159 Z" fill="#222" stroke="#222" stroke-linejoin="round"/><rect x="918.5" y="144.5" width="15" height="15" fill="#fff" stroke="#333" stroke-width="1"/><rect x="940.5" y="144.5" width="15" height="15" fill="#f4f4f4" stroke="#b5b5b5" stroke-width="1" rx="2"/><rect x="943.5" y="149.5" width="9" height="7" fill="none" stroke="#b0b0b0" stroke-width="1"/><path d="M943.5 152.5 H952.5 M946.5 149.5 V156.5 M949.5 149.5 V156.5 M945.5 146 V149 M950.5 146 V149" stroke="#b0b0b0" stroke-width="1"/><rect x="971.5" y="144.5" width="15" height="15" fill="#fff" stroke="#333" stroke-width="1"/><rect x="993.5" y="144.5" width="15" height="15" fill="#f4f4f4" stroke="#b5b5b5" stroke-width="1" rx="2"/><path d="M995 155 L998 152 L1000 153 L1003 149 L1005 150 L1007 147" fill="none" stroke="#555" stroke-width="1"/><path d="M995 157 L998 154 L1000 155 L1003 151 L1005 152 L1007 149" fill="none" stroke="#aaa" stroke-width="1"/><rect x="1024.5" y="144.5" width="15" height="15" fill="#fff" stroke="#333" stroke-width="1"/><path d="M1027.5 152 L1030.5 155 L1036.5 148.5" fill="none" stroke="#222" stroke-width="1.3"/><rect x="1046.5" y="144.5" width="15" height="15" fill="#f4f4f4" stroke="#b5b5b5" stroke-width="1" rx="2"/><path d="M1048 155 L1051 152 L1053 153 L1056 149 L1058 150 L1060 147" fill="none" stroke="#b5b5b5" stroke-width="1"/><path d="M1048 157 L1051 154 L1053 155 L1056 151 L1058 152 L1060 149" fill="none" stroke="#c8c8c8" stroke-width="1"/><rect x="1412.5" y="138.5" width="90" height="27" fill="#e1e1e1" stroke="#adadad" stroke-width="1"/><text x="1449" y="156.5" font-size="12.5" fill="#000" text-anchor="middle">Action</text><path d="M1488 150 H1496 L1492 154.5 Z" fill="#111"/></g>
<rect x="628.5" y="667" width="852.5" height="543.5" fill="#58df2a"/><polygon points="628.5,1210.5 628.5,1077.6 799.0,1140.6 969.5,1142.9 1140.0,1078 1310.5,1140.7 1481.0,1143 1481.0,1210.5" fill="#ff1526"/><polyline points="628.5,1077.6 799.0,1140.6 969.5,1142.9 1140.0,1078 1310.5,1140.7 1481.0,1143" fill="none" stroke="#333" stroke-width="2"/><rect x="628" y="666" width="853.5" height="2" fill="#222"/><rect x="622" y="666.5" width="1" height="540.5" fill="#222"/><path d="M614 1206.5 H622 M618 1191.5 H622 M618 1176.5 H622 M618 1160.5 H622 M618 1145.5 H622 M614 1129.5 H622 M618 1114.5 H622 M618 1099.5 H622 M618 1083.5 H622 M618 1068.5 H622 M614 1052.5 H622 M618 1037.5 H622 M618 1022.5 H622 M618 1006.5 H622 M618 991.5 H622 M614 975.5 H622 M618 960.5 H622 M618 944.5 H622 M618 929.5 H622 M618 914.5 H622 M614 898.5 H622 M618 883.5 H622 M618 867.5 H622 M618 852.5 H622 M618 837.5 H622 M614 821.5 H622 M618 806.5 H622 M618 790.5 H622 M618 775.5 H622 M618 759.5 H622 M614 744.5 H622 M618 729.5 H622 M618 713.5 H622 M618 698.5 H622 M618 682.5 H622 M614 667.5 H622" stroke="#222" stroke-width="1"/><text x="608.5" y="1212.69" font-size="16" fill="#222" text-anchor="end" textLength="16.8" lengthAdjust="spacingAndGlyphs">65</text><text x="608.5" y="1135.6200000000001" font-size="16" fill="#222" text-anchor="end" textLength="16.8" lengthAdjust="spacingAndGlyphs">70</text><text x="608.5" y="1058.55" font-size="16" fill="#222" text-anchor="end" textLength="16.8" lengthAdjust="spacingAndGlyphs">75</text><text x="608.5" y="981.48" font-size="16" fill="#222" text-anchor="end" textLength="16.8" lengthAdjust="spacingAndGlyphs">80</text><text x="608.5" y="904.4100000000001" font-size="16" fill="#222" text-anchor="end" textLength="16.8" lengthAdjust="spacingAndGlyphs">85</text><text x="608.5" y="827.34" font-size="16" fill="#222" text-anchor="end" textLength="16.8" lengthAdjust="spacingAndGlyphs">90</text><text x="608.5" y="750.27" font-size="16" fill="#222" text-anchor="end" textLength="16.8" lengthAdjust="spacingAndGlyphs">95</text><text x="608.5" y="673.2" font-size="16" fill="#222" text-anchor="end" textLength="25.3" lengthAdjust="spacingAndGlyphs">100</text><rect x="628.5" y="1213" width="853" height="1" fill="#222"/><path d="M628.5 1213 V1222 M663.5 1213 V1218 M697.5 1213 V1218 M731.5 1213 V1218 M765.5 1213 V1218 M799.5 1213 V1222 M833.5 1213 V1218 M867.5 1213 V1218 M901.5 1213 V1218 M935.5 1213 V1218 M970.5 1213 V1222 M1004.5 1213 V1218 M1038.5 1213 V1218 M1072.5 1213 V1218 M1106.5 1213 V1218 M1140.5 1213 V1222 M1174.5 1213 V1218 M1208.5 1213 V1218 M1242.5 1213 V1218 M1276.5 1213 V1218 M1310.5 1213 V1222 M1345.5 1213 V1218 M1379.5 1213 V1218 M1413.5 1213 V1218 M1447.5 1213 V1218 M1481.5 1213 V1222" stroke="#222" stroke-width="1"/><text x="628.5" y="1238.7" font-size="16" fill="#222" text-anchor="middle" textLength="61.5" lengthAdjust="spacingAndGlyphs">8:10 AM</text><text x="799.0" y="1238.7" font-size="16" fill="#222" text-anchor="middle" textLength="61.5" lengthAdjust="spacingAndGlyphs">8:20 AM</text><text x="969.5" y="1238.7" font-size="16" fill="#222" text-anchor="middle" textLength="61.5" lengthAdjust="spacingAndGlyphs">8:30 AM</text><text x="1140.0" y="1238.7" font-size="16" fill="#222" text-anchor="middle" textLength="61.5" lengthAdjust="spacingAndGlyphs">8:40 AM</text><text x="1310.5" y="1238.7" font-size="16" fill="#222" text-anchor="middle" textLength="61.5" lengthAdjust="spacingAndGlyphs">8:50 AM</text><text x="1481.0" y="1238.7" font-size="16" fill="#222" text-anchor="middle" textLength="61.5" lengthAdjust="spacingAndGlyphs">9:00 AM</text><rect x="820" y="1251.5" width="8" height="8" fill="#ff1526"/><text x="834.7" y="1260" font-size="12.6" fill="#222" textLength="221.6" lengthAdjust="spacingAndGlyphs">Red Percentage - All - Replication Base</text><rect x="1067.5" y="1251.5" width="8" height="8" fill="#58df2a"/><text x="1081.3" y="1260" font-size="12.6" fill="#222" textLength="234.3" lengthAdjust="spacingAndGlyphs">Green Percentage - All - Replication Base</text><text x="691" y="964.2" font-size="13" fill="#222" textLength="101.5" lengthAdjust="spacingAndGlyphs">8:13 AM, 80.1948</text><rect x="1439.5" y="1289.5" width="93" height="25" fill="#e1e1e1" stroke="#adadad" stroke-width="1"/><text x="1486" y="1306.5" font-size="12.5" fill="#000" text-anchor="middle" textLength="88" lengthAdjust="spacingAndGlyphs">Show All Turns</text><rect x="555.5" y="1327.5" width="90" height="25" fill="#e1e1e1" stroke="#adadad" stroke-width="1"/><text x="600.5" y="1344.5" font-size="12.5" fill="#000" text-anchor="middle">Help</text><rect x="1354" y="1328" width="89" height="24" fill="#e1e1e1" stroke="#0078d7" stroke-width="2"/><text x="1398.5" y="1344.5" font-size="12.5" fill="#000" text-anchor="middle">OK</text><rect x="1452.5" y="1327.5" width="90" height="25" fill="#e1e1e1" stroke="#adadad" stroke-width="1"/><text x="1497.5" y="1344.5" font-size="12.5" fill="#000" text-anchor="middle">Cancel</text>
</svg></body></html>
